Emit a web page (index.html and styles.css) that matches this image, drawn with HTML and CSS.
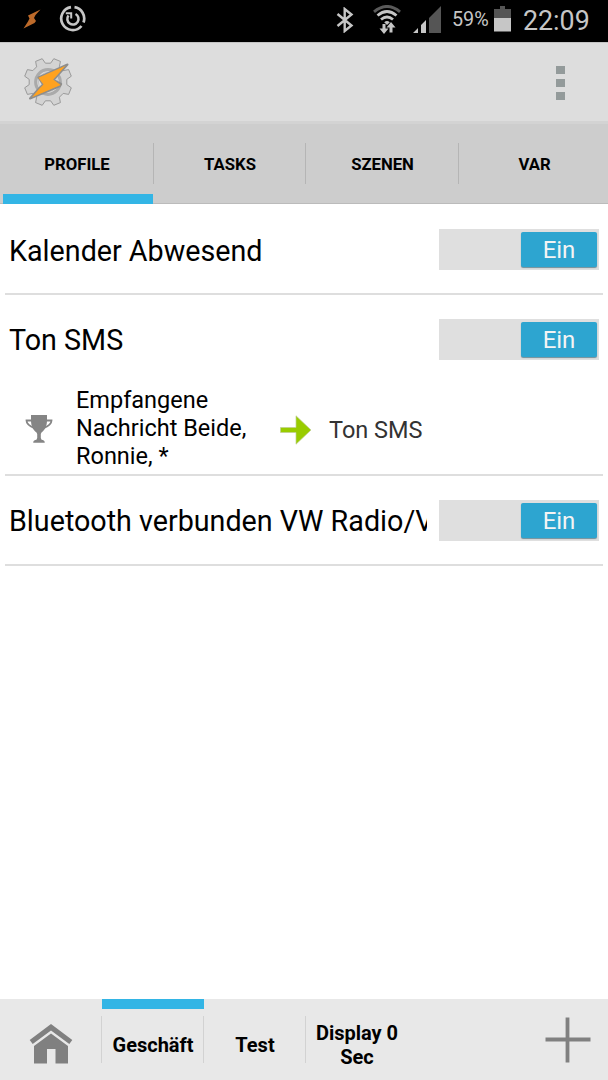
FILE: index.html
```html
<!DOCTYPE html>
<html lang="de">
<head>
    <meta charset="utf-8">
    <title>Tasker</title>
    <link rel="stylesheet" href="styles.css">
</head>
<body>
<div class="screen">

    <div class="statusbar">
        <svg class="st-bolt" width="18" height="20" viewBox="0 0 18 20"><path d="M17.500 0.500L5 6.500l1.500 3-1.500 3L0.500 19.500l11-5.500 1.500-2-2-3 1.500-3z" fill="#bd6a2a"/></svg>
        <svg class="st-sync" width="28" height="28" viewBox="0 0 28 28" fill="none" stroke="#c6c6c6">
            <path d="M12 2.200A11.500 11.500 0 1 0 22.500 21M15.500 2.200A11.500 11.500 0 0 1 24.500 17.500" stroke-width="2.700"/>
            <path d="M9.500 10.500a5.600 5.600 0 1 0 7 -1.500" stroke-width="2.500"/>
            <path d="M6.800 8.300h5.400v5.200" stroke-width="2"/>
        </svg>
        <div class="st-right">
            <svg class="st-bt" width="18" height="26" viewBox="0 0 18 26"><path d="M1.500 7L15.500 18.500 8.700 24V2L15.500 7.500 1.500 19" fill="none" stroke="#c6c6c6" stroke-width="2.400"/></svg>
            <svg class="st-wifi" width="28" height="30" viewBox="0 0 28 30" fill="none">
                <path d="M1 6.800Q14 -3.800 27 6.800" stroke="#5a5a5a" stroke-width="3"/>
                <path d="M4.500 10.500Q14 2.500 23.500 10.500M8 14.500Q14 9.500 20 14.500" stroke="#c6c6c6" stroke-width="2.800"/>
                <path d="M11.200 17.200Q14 14.600 16.800 17.200L14 20z" fill="#c6c6c6"/>
                <path d="M11 19v7M18 27.500v-7" stroke="#c6c6c6" stroke-width="3"/>
                <path d="M6.500 23.500h9l-4.500 5.500zM13.500 22.500h9l-4.500-5.500z" fill="#c6c6c6"/>
            </svg>
            <svg class="st-signal" width="28" height="27" viewBox="0 0 28 27">
                <path d="M0 27l5-5v5zM8 27v-8l5-5v13z" fill="#c6c6c6"/>
                <path d="M16 27V12L28 0v27z" fill="#555"/>
            </svg>
            <span class="st-percent">59%</span>
            <svg class="st-battery" width="17" height="26" viewBox="0 0 17 26">
                <path d="M0 3h6V0h5v3h6v9H0z" fill="#555"/>
                <path d="M0 12h17v13.500H0z" fill="#c6c6c6"/>
            </svg>
            <span class="st-time">22:09</span>
        </div>
    </div>

    <div class="appbar">
        <svg class="logo" width="50" height="50" viewBox="-25 -25 50 50">
            <path d="M18.800 2.600L23.300 5.800 20.600 12.400 15.200 11.400 11.400 15.200 12.400 20.600 5.800 23.300 2.600 18.800 -2.600 18.800 -5.800 23.300 -12.400 20.600 -11.400 15.200 -15.200 11.400 -20.600 12.400 -23.300 5.800 -18.800 2.600 -18.800 -2.600 -23.300 -5.800 -20.600 -12.400 -15.200 -11.400 -11.400 -15.200 -12.400 -20.600 -5.800 -23.300 -2.600 -18.800 2.600 -18.800 5.800 -23.300 12.400 -20.600 11.400 -15.200 15.200 -11.400 20.600 -12.400 23.300 -5.800 18.800 -2.600z" fill="#d3d3d3" stroke="#929292" stroke-width="0.900"/>
            <circle r="12.300" fill="#dedede" stroke="#aaa" stroke-width="3.200"/>
            <circle r="9.600" fill="none" stroke="#c3c3c3" stroke-width="1"/>
            <path d="M19.500 -17.500L-9.500 -4.500 -5 2.500 -9 6.500 -18 16.500 12 4 13.200 2 5.500 -2 9 -6z" fill="#ffa21f" stroke="#8d8d8d" stroke-width="2" stroke-linejoin="round"/>
            <path d="M17.500 -16.200L-9.700 -4.200 -4.500 2.500 -8.500 6.500 -16 15.200 12.600 3 5.200 -2.500 8.500 -6z" fill="#ffa21f"/>
        </svg>
        <div class="overflow"><i></i><i></i><i></i></div>
    </div>

    <div class="tabs">
        <div class="tab active">PROFILE</div>
        <div class="tab">TASKS</div>
        <div class="tab">SZENEN</div>
        <div class="tab">VAR</div>
    </div>

    <div class="list">
        <div class="profile">
            <div class="row">
                <div class="name">Kalender Abwesend</div>
                <div class="switch"><div class="thumb">Ein</div></div>
            </div>
        </div>
        <div class="profile">
            <div class="row">
                <div class="name">Ton SMS</div>
                <div class="switch"><div class="thumb">Ein</div></div>
            </div>
            <div class="detail">
                <svg class="trophy" width="28" height="28" viewBox="0 0 28 28">
                    <path d="M6 0h16v5c0 6-2 10-5.500 12.500L15.800 19v4l0.800 1.800c1.500 0.200 3.200 0.700 3.200 2.900H8.200c0-2.200 1.700-2.700 3.200-2.900L12.200 23v-4l-0.700-1.500C8 15 6 11 6 5z" fill="#858585"/>
                    <path d="M7 5.500H1.500c0 4 3.500 6 8.500 8M21 5.500h5.500c0 4-3.500 6-8.500 8" fill="none" stroke="#858585" stroke-width="1.800"/>
                </svg>
                <div class="context">Empfangene<br>Nachricht Beide,<br>Ronnie, *</div>
                <svg class="arrow" width="32" height="30" viewBox="0 0 32 30"><path d="M0.500 12.500h15.500V0.800L31 15 16 29.200V17.500H0.500z" fill="#99cc00" stroke="#bfcf94" stroke-width="0.700"/></svg>
                <div class="task">Ton SMS</div>
            </div>
        </div>
        <div class="profile">
            <div class="row">
                <div class="name">Bluetooth verbunden VW Radio/V</div>
                <div class="switch"><div class="thumb">Ein</div></div>
            </div>
        </div>
    </div>

    <div class="bottombar">
        <div class="project home">
            <svg width="44" height="40" viewBox="0 0 44 40" fill="#808080">
                <path d="M22 0L43.300 16 40.300 20 22 6.500 3.700 20 0.700 16z"/>
                <path d="M22 9.500L39 22v17.500H26.500v-14.500h-8.500v14.500H5V22z"/>
            </svg>
        </div>
        <div class="project active">Geschäft</div>
        <div class="project">Test</div>
        <div class="project">Display 0 Sec</div>
        <div class="add">
            <svg width="46" height="46" viewBox="0 0 46 46"><path d="M22.500 0.500v45M0.500 22.500h45" stroke="#808080" stroke-width="3.800"/></svg>
        </div>
    </div>

</div>
</body>
</html>
```
FILE: styles.css
```css
*{
    box-sizing: border-box;
}
body{
    margin: 0;
    background-color: #fff;
    font-family: Roboto, "Liberation Sans", sans-serif;
    color: #000;
}
.screen{
    width: 608px;
    height: 1080px;
    display: flex;
    flex-direction: column;
    overflow: hidden;
}
svg{
    display: block;
    flex: none;
}

/* status bar */
.statusbar{
    height: 42px;
    flex: none;
    background-color: #000;
    color: #c6c6c6;
    display: flex;
    align-items: flex-start;
    padding-left: 23px;
}
.st-bolt{
    margin-top: 9px;
}
.st-sync{
    margin: 5px 0 0 18px;
}
.st-right{
    display: flex;
    margin-left: auto;
    padding-right: 18px;
}
.st-bt{
    margin: 7px 1px 0 0;
}
.st-wifi{
    margin: 5px 0 0 18px;
}
.st-signal{
    margin: 6px 0 0 12px;
}
.st-percent{
    width: 36px;
    margin-left: 11px;
    font-size: 19.800px;
    line-height: 40px;
}
.st-battery{
    margin: 6px 0 0 6px;
}
.st-time{
    width: 67px;
    margin-left: 12px;
    font-size: 26.800px;
    line-height: 42px;
    white-space: nowrap;
}

/* app bar */
.appbar{
    height: 79px;
    flex: none;
    background-color: #ddd;
    border-top: 1px solid #c4c4c4;
    display: flex;
    align-items: center;
    justify-content: space-between;
    padding: 0 43px 0 23px;
}
.overflow{
    display: flex;
    flex-direction: column;
    gap: 5px;
    padding-top: 2px;
}
.overflow i{
    width: 9px;
    height: 8px;
    background-color: #939a9a;
}

/* tabs */
.tabs{
    height: 83px;
    flex: none;
    display: grid;
    grid-template-columns: 154px 152px 153px 149px;
    background-color: #cdcdcd;
    border-top: 3px solid #d3d3d3;
    border-bottom: 1px solid #bbb;
}
.tab{
    position: relative;
    display: flex;
    align-items: center;
    justify-content: center;
    padding-top: 2px;
    font-size: 16.700px;
    font-weight: 700;
}
.tab:last-child{
    padding-left: 2px;
}
.tab:not(:last-child)::after{
    content: "";
    position: absolute;
    right: 0;
    top: 19px;
    width: 1px;
    height: 41px;
    background-color: #b5b5b5;
}
.tab.active::before{
    content: "";
    position: absolute;
    left: 3px;
    right: 1px;
    bottom: -1px;
    height: 10px;
    background-color: #33b5e5;
}

/* profiles */
.list{
    flex: 1;
    padding: 1px 5px 0;
}
.profile{
    border-bottom: 2px solid #dedede;
}
.row{
    height: 88px;
    display: flex;
    align-items: center;
    padding: 0 4px;
}
.name{
    width: 418px;
    margin-right: 12px;
    padding-top: 2px;
    font-size: 28.700px;
    line-height: 36px;
    white-space: nowrap;
    overflow: hidden;
}
.profile:first-child .name{
    padding-top: 4px;
}
.switch{
    width: 160px;
    height: 41px;
    flex: none;
    background-color: #dfdfdf;
    display: flex;
    justify-content: flex-end;
    padding: 3px 2px 3px 0;
}
.thumb{
    width: 76px;
    height: 35px;
    border-radius: 2px;
    background-color: #2da5d0;
    box-shadow: 0 1px 1px #6f8f9b;
    color: #f4f4f4;
    font-size: 24px;
    line-height: 36px;
    text-align: center;
}
.detail{
    height: 91px;
    display: flex;
    align-items: center;
    padding-left: 20px;
    font-size: 23.500px;
    line-height: 28px;
}
.context{
    width: 204px;
    margin-left: 23px;
    padding-bottom: 1px;
}
.arrow{
    margin-top: 2px;
}
.task{
    margin-left: 17px;
    padding-top: 2px;
    color: #333;
}

/* bottom bar */
.bottombar{
    height: 81px;
    flex: none;
    display: flex;
    background-color: #e8e8e8;
}
.project{
    position: relative;
    width: 102px;
    padding: 10px 8px 0;
    display: flex;
    align-items: center;
    justify-content: center;
    text-align: center;
    font-size: 20px;
    line-height: 24px;
    font-weight: 700;
}
.home{
    padding-top: 9px;
}
.project:nth-child(-n+3)::after{
    content: "";
    position: absolute;
    right: 0;
    top: 17px;
    width: 1px;
    height: 47px;
    background-color: #d2d2d2;
}
.project.active::before{
    content: "";
    position: absolute;
    left: 0;
    top: 0;
    width: 102px;
    height: 10px;
    background-color: #33b5e5;
}
.add{
    margin-left: auto;
    padding: 18px 17px 0 0;
}
```
